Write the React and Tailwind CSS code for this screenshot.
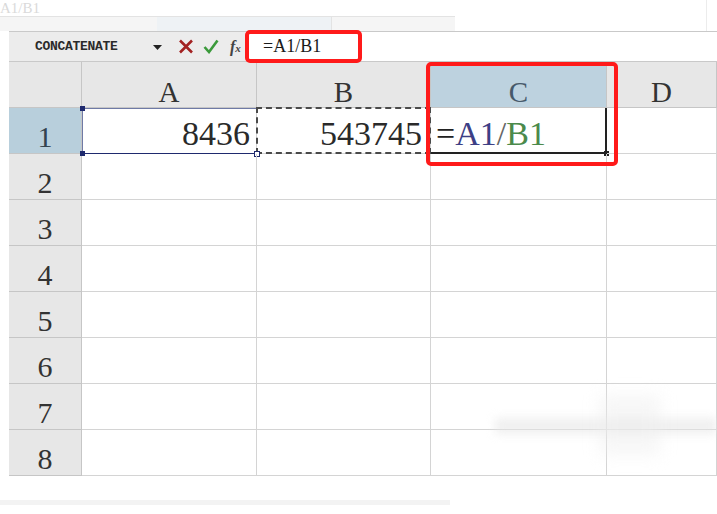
import React from "react";

const serif = { fontFamily: '"Liberation Serif", "DejaVu Serif", serif' };
const mono = { fontFamily: '"Liberation Mono", "DejaVu Sans Mono", monospace' };

const cols = ["A", "B", "C", "D"];
const rows = [1, 2, 3, 4, 5, 6, 7, 8];

const Corner = ({ className }) => (
  <span className={`absolute w-[5px] h-[5px] bg-[#1f2a6e] ${className}`} />
);

const FormulaBar = () => (
  <div className="flex h-[31px] pl-[9px]">
    <div className="flex items-center w-[236px] bg-[#ececec] border-t border-b border-[#c9c9c9]">
      <span className="pl-[26px] w-[140px] text-[13px] font-bold text-[#2a2a2a] tracking-[-0.3px]" style={mono}>
        CONCATENATE
      </span>
      <svg width="9" height="6" viewBox="0 0 9 6" className="ml-[4px] mt-[3px]">
        <path d="M0 0 L9 0 L4.5 5 Z" fill="#222" />
      </svg>
      <svg width="16" height="15" viewBox="0 0 16 15" className="ml-[16px]">
        <path d="M2 1.5 L14 13.5 M14 1.5 L2 13.5" stroke="#a32222" strokeWidth="2.6" />
      </svg>
      <svg width="16" height="15" viewBox="0 0 16 15" className="ml-[9px]">
        <path d="M1.5 8 L6 13 L14.5 1.5" stroke="#3b9a3b" strokeWidth="2.6" fill="none" />
      </svg>
      <span className="ml-[11px] text-[16px] italic font-bold text-[#444] leading-none" style={serif}>
        f<span className="text-[11px]">x</span>
      </span>
    </div>
    <div className="flex-1 flex items-center bg-white border-t border-b border-[#c9c9c9] pl-[18px]">
      <span className="text-[18px] text-[#1a1a1a]" style={serif}>=A1/B1</span>
    </div>
  </div>
);

const Header = ({ label, active }) => (
  <div
    className={`flex items-end justify-center border-r border-b border-[#c6c6c6] leading-none text-[29px] ${
      active ? "bg-[#bdd2df] text-[#47596a]" : "bg-[#e7e7e7] text-[#333]"
    }`}
    style={serif}
  >
    {label}
  </div>
);

const RowHeader = ({ n }) => (
  <div
    className={`flex items-end justify-center pb-[1px] border-r border-b border-[#c6c6c6] leading-none text-[30px] ${
      n === 1 ? "bg-[#b8cfdc] text-[#33434f]" : "bg-[#e7e7e7] text-[#333]"
    }`}
    style={serif}
  >
    {n}
  </div>
);

const Cell = ({ r, c }) => {
  const base = "relative border-r border-b border-[#d4d4d4] leading-none text-[34px]";
  if (r === 1 && c === "A") {
    return (
      <div className={`${base} flex items-end justify-end pr-[6px] pb-[2px] text-[#2a2a2a]`} style={serif}>
        <span className="absolute inset-x-0 top-0 h-px bg-[#6f7aa6]" />
        <span className="absolute inset-x-0 bottom-[-1px] h-px bg-[#1f2a6e]" />
        <span className="absolute left-0 inset-y-0 w-px bg-[#6f7aa6]" />
        <Corner className="left-[-2px] top-[-2px]" />
        <Corner className="left-[-2px] bottom-[-3px]" />
        8436
      </div>
    );
  }
  if (r === 1 && c === "B") {
    return (
      <div className={`${base} flex items-end justify-end pr-[8px] pb-[2px] text-[#2a2a2a]`} style={serif}>
        <span className="absolute inset-[-1px] border-2 border-dashed border-[#4a4a4a]" />
        <span className="absolute left-[-3px] bottom-[-4px] w-[6px] h-[6px] border border-[#1f2a6e] bg-white" />
        543745
      </div>
    );
  }
  if (r === 1 && c === "C") {
    return (
      <div className={`${base} flex items-end pl-[5px] pb-[2px]`} style={serif}>
        <span className="absolute right-[-1px] top-0 bottom-[-1px] w-[2px] bg-[#222]" />
        <span className="absolute left-0 right-[-1px] bottom-[-1px] h-[2px] bg-[#222]" />
        <span className="absolute right-[-3px] bottom-[-3px] w-[5px] h-[5px] bg-[#222]" />
        <span className="text-[#222]">=</span>
        <span className="text-[#3d3f85]">A1</span>
        <span className="text-[#666]">/</span>
        <span className="text-[#4b8a4b]">B1</span>
      </div>
    );
  }
  return <div className={base} />;
};

export default function App() {
  return (
    <div className="relative w-[717px] h-[514px] bg-white overflow-hidden">
      <div className="relative h-[31px]">
        <div className="h-[16px] flex items-center text-[15px] text-[#dadada] leading-none" style={serif}>
          A1/B1
        </div>
        <div className="flex h-[15px] w-[455px] border-t border-[#e3e3e3]">
          <div className="w-[157px] bg-[#f5f5f5]" />
          <div className="w-[175px] bg-[#eef2f5] border-r border-[#e3e3e3]" />
          <div className="flex-1 bg-[#f5f5f5]" />
        </div>
        <span className="absolute right-[10px] top-0 h-[31px] w-px bg-[#ececec]" />
      </div>

      <FormulaBar />

      <div className="pl-[9px]">
        <div className="grid grid-cols-[73px_175px_174px_176px_110px] grid-rows-[repeat(9,46px)]">
          <div className="bg-[#e7e7e7] border-r border-b border-[#c6c6c6]" />
          {cols.map((c) => (
            <Header key={c} label={c} active={c === "C"} />
          ))}
          {rows.map((r) => (
            <React.Fragment key={r}>
              <RowHeader n={r} />
              {cols.map((c) => (
                <Cell key={c} r={r} c={c} />
              ))}
            </React.Fragment>
          ))}
        </div>
      </div>

      <div className="mt-[24px] h-[5px] w-[450px] bg-[#f3f3f3]" />

      {/* annotation boxes */}
      <div className="absolute left-[245px] top-[30px] w-[117px] h-[33px] border-[4px] border-[#ff1a1a] rounded-[5px]" />
      <div className="absolute left-[426px] top-[62px] w-[192px] h-[104px] border-[4px] border-[#ff1a1a] rounded-[5px]" />

      {/* blurred watermark */}
      <div className="absolute left-[495px] top-[418px] w-[222px] h-[16px] bg-[#e6e6e6] opacity-60 blur-[5px]" />
      <div className="absolute left-[600px] top-[395px] w-[60px] h-[60px] bg-[#eeeeee] opacity-50 blur-[8px]" />
    </div>
  );
}
